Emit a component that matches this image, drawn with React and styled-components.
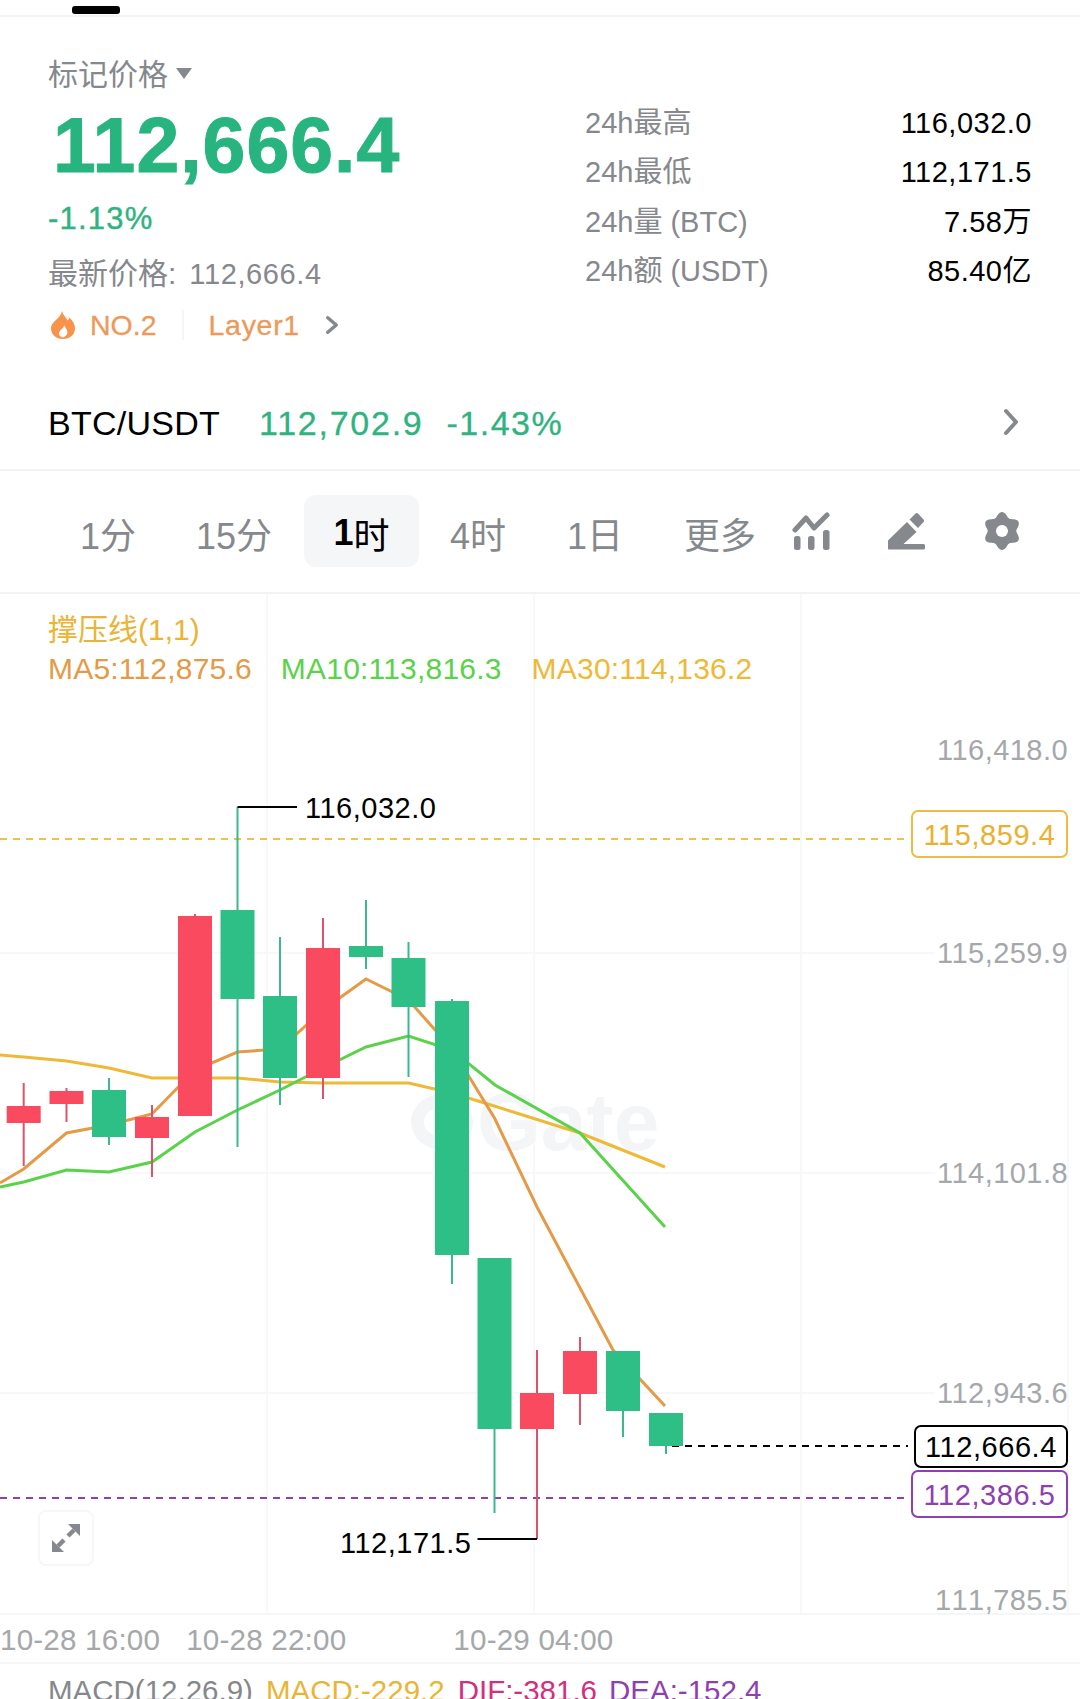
import React from "react";
import styled, { createGlobalStyle } from "styled-components";

const Global = createGlobalStyle`
  html, body { margin: 0; padding: 0; background: #fff; }
  * { box-sizing: border-box; }
`;

const Page = styled.div`
  width: 1080px;
  height: 1699px;
  overflow: hidden;
  background: #fff;
  color: #000;
  font-family: "Liberation Sans", "Noto Sans CJK SC", sans-serif;
`;

const TopBar = styled.div`
  height: 17px;
  padding: 6px 0 0 72px;
  border-bottom: 2px solid #f2f3f4;
`;
const Pill = styled.div`
  width: 48px;
  height: 8px;
  border-radius: 3px;
  background: #000;
`;

const Header = styled.section`
  height: 328px;
  padding: 38px 48px 0 48px;
  display: flex;
  justify-content: space-between;
`;
const Left = styled.div`
  display: flex;
  flex-direction: column;
`;
const MarkLabel = styled.div`
  display: flex;
  align-items: center;
  gap: 8px;
  height: 40px;
  line-height: 36px;
  font-size: 30px;
  color: #85888c;
`;
const Caret = styled.span`
  width: 0;
  height: 0;
  border-left: 8px solid transparent;
  border-right: 8px solid transparent;
  border-top: 11px solid #85888c;
  margin-top: -4px;
`;
const BigPrice = styled.div`
  margin: 10px 0 0 5px;
  height: 80px;
  line-height: 80px;
  font-size: 77px;
  font-weight: 700;
  letter-spacing: 1px;
  color: #27b47f;
  -webkit-text-stroke: 1px #27b47f;
`;
const Change = styled.div`
  margin-top: 16px;
  height: 36px;
  line-height: 36px;
  font-size: 31px;
  color: #2fb380;
  letter-spacing: 1.2px;
  -webkit-text-stroke: 0.4px #2fb380;
`;
const Latest = styled.div`
  margin-top: 19px;
  height: 36px;
  line-height: 36px;
  font-size: 30px;
  color: #85888c;
  display: flex;
  gap: 13px;
`;
const LatestValue = styled.span`
  font-size: 29px;
  letter-spacing: 0.6px;
`;
const TagRow = styled.div`
  margin-top: 13px;
  height: 40px;
  display: flex;
  align-items: center;
  font-size: 28.5px;
  color: #ec9a5a;
  -webkit-text-stroke: 0.3px #ec9a5a;
`;
const TagDivider = styled.span`
  width: 2px;
  height: 30px;
  background: #f5f5f5;
  margin: 0 25px 0 25px;
`;
const TagTrack = styled.span`
  letter-spacing: 0.7px;
`;
const Right = styled.div`
  width: 447px;
  padding-top: 43px;
`;
const StatRow = styled.div`
  height: 49.5px;
  line-height: 40px;
  display: flex;
  justify-content: space-between;
  align-items: center;
`;
const StatLabel = styled.span`
  font-size: 29px;
  color: #85888c;
`;
const StatValue = styled.span`
  font-size: 29px;
  letter-spacing: 0.5px;
  color: #000;
`;

const Ticker = styled.section`
  height: 126px;
  padding: 54px 61px 22px 48px;
  border-bottom: 2px solid #f2f3f4;
  display: flex;
  align-items: center;
`;
const Pair = styled.span`
  font-size: 34px;
  line-height: 48px;
  letter-spacing: 0.25px;
`;
const TickerPrice = styled.span`
  margin-left: ${(p) => p.$gap}px;
  font-size: 34px;
  line-height: 48px;
  color: #2fb380;
  letter-spacing: ${(p) => p.$track}px;
  -webkit-text-stroke: 0.3px #2fb380;
`;
const Spacer = styled.span`
  flex: 1;
`;
const TickerChevron = styled.span`
  display: flex;
  margin-top: -3px;
`;

const Tabs = styled.nav`
  height: 123px;
  padding: 24px 0 25px 45px;
  border-bottom: 2px solid #f2f3f4;
  display: flex;
  align-items: flex-start;
`;
const Tab = styled.div`
  width: ${(p) => p.$w}px;
  margin-left: ${(p) => p.$ml || 0}px;
  height: 72px;
  border-radius: 12px;
  padding-top: 4px;
  display: flex;
  align-items: center;
  justify-content: center;
  font-size: 36px;
  color: ${(p) => (p.$active ? "#000" : "#85888c")};
  background: ${(p) => (p.$active ? "#f4f6f8" : "transparent")};
`;
const TabDigit = styled.b`
  font-weight: 700;
`;
const ToolIcons = styled.div`
  height: 72px;
  margin-left: 5px;
  display: flex;
  gap: 58px;
  padding-top: 17px;
`;

const Chart = styled.section`
  position: relative;
  height: 1021px;
  padding: 16px 0 0 48px;
  border-bottom: 2px solid #f5f6f7;
`;
const ChartCanvas = styled.svg`
  position: absolute;
  left: 0;
  top: 0;
  width: 1080px;
  height: 1020px;
`;
const Watermark = styled.div`
  position: absolute;
  left: 411px;
  top: 496px;
  display: flex;
  align-items: center;
  height: 64px;
  font-size: 82px;
  font-weight: 700;
  color: #f3f5f6;
`;
const WatermarkRing = styled.span`
  width: 62px;
  height: 56px;
  border: 13px solid #f3f5f6;
  border-radius: 50%;
  margin-right: 4px;
`;
const Legend = styled.div`
  position: relative;
  font-size: 30px;
  line-height: 40px;
  color: #eab436;
`;
const MaRow = styled.div`
  display: flex;
  height: 38px;
  line-height: 37px;
  letter-spacing: 0.2px;
`;
const Ma = styled.span`
  color: ${(p) => p.$c};
  margin-right: ${(p) => p.$gap}px;
`;
const AxisLabel = styled.span`
  position: absolute;
  right: 12px;
  top: ${(p) => p.$y - 20}px;
  line-height: 40px;
  font-size: 29px;
  letter-spacing: 0.45px;
  font-kerning: ${(p) => (p.$plain ? "none" : "auto")};
  color: #a5a8ab;
`;
const PriceTag = styled.span`
  position: absolute;
  right: 12px;
  top: ${(p) => p.$y}px;
  width: ${(p) => p.$w}px;
  height: ${(p) => p.$h}px;
  padding-top: 2px;
  border: 2px solid ${(p) => p.$c};
  border-radius: 7px;
  display: flex;
  align-items: center;
  justify-content: center;
  font-size: 29px;
  letter-spacing: 0.55px;
  color: ${(p) => p.$text || p.$c};
  background: #fff;
`;
const Extreme = styled.span`
  position: absolute;
  left: ${(p) => p.$x}px;
  top: ${(p) => p.$y - 20}px;
  line-height: 40px;
  font-size: 29px;
  letter-spacing: 0.5px;
  color: #000;
`;
const ExpandButton = styled.div`
  position: absolute;
  left: 38px;
  top: 916px;
  width: 56px;
  height: 56px;
  border: 2px solid #f6f7f8;
  border-radius: 8px;
  display: flex;
  align-items: center;
  justify-content: center;
`;

const TimeAxis = styled.div`
  height: 49px;
  border-bottom: 2px solid #f5f6f7;
  display: flex;
  align-items: center;
  font-size: 29.6px;
  letter-spacing: 0.2px;
  color: #a5a8ab;
`;
const TimeLabel = styled.span`
  margin-left: ${(p) => p.$ml || 0}px;
  padding-top: 2px;
`;
const MacdRow = styled.div`
  padding: 7px 0 0 48px;
  display: flex;
  font-size: 29.5px;
  line-height: 40px;
  white-space: nowrap;
`;
const MacdItem = styled.span`
  color: ${(p) => p.$c};
  margin-right: ${(p) => p.$gap}px;
`;

const G = "#2dbf86";
const R = "#f94a60";
const GW = "#3bb88c";
const RW = "#d9546a";

const candles = [
  [23.7, 1083, 1166, 1106, 1123, "r"],
  [66.5, 1088, 1122, 1091, 1104, "r"],
  [109, 1078, 1145, 1090, 1137, "g"],
  [152, 1105, 1177, 1117, 1138, "r"],
  [195, 914, 1116, 916, 1116, "r"],
  [237.5, 807, 1147, 910, 999, "g"],
  [280, 937, 1105, 996, 1078, "g"],
  [323, 918, 1099, 948, 1078, "r"],
  [366, 900, 969, 946, 957, "g"],
  [408.5, 942, 1077, 958, 1007, "g"],
  [452, 999, 1284, 1001, 1255, "g"],
  [494.5, 1258, 1513, 1258, 1429, "g"],
  [537, 1350, 1539, 1393, 1429, "r"],
  [580, 1337, 1425, 1351, 1394, "r"],
  [623, 1351, 1437, 1351, 1411, "g"],
  [666, 1413, 1454, 1413, 1446, "g"],
];

const ma30 = "0,1055 23.7,1057 66.5,1061 109,1068 152,1078 195,1078 237.5,1078 280,1082 323,1083 366,1083 408.5,1083 452,1093 491,1105 580,1133 665,1167";
const ma10 = "0,1187 23.7,1182 66.5,1170 109,1172 152,1162 195,1132 237.5,1110 280,1090 323,1068 366,1047 408.5,1036 452,1050 495,1085 580,1133 665,1227";
const ma5 = "0,1183 23.7,1169 66.5,1133 109,1125 152,1114 195,1070 237.5,1052 280,1049 323,1010 366,979 408.5,1000 452,1049 494.5,1118 537,1207 613,1350 665,1406";

const gearPath = (() => {
  const pts = [];
  for (let i = 0; i < 96; i++) {
    const t = (i / 96) * Math.PI * 2;
    const r = 16.6 + 2.3 * Math.cos(6 * t);
    pts.push(`${(19 + r * Math.sin(t)).toFixed(2)} ${(19 - r * Math.cos(t)).toFixed(2)}`);
  }
  return `M${pts.join("L")}Z`;
})();

const IC = "#85888c";

const FlameIcon = () => (
  <svg width="24" height="28" viewBox="0 0 24 28" style={{ marginRight: 15, flex: "none", marginLeft: 3 }}>
    <path
      fill="#f7934a"
      fillRule="evenodd"
      d="M11 0C12 4 15 6 16.5 9.5C17.5 8.6 18 7.6 18.3 6.4C21.8 9.6 24 13.2 24 17.2C24 23.4 19 28 12 28C5 28 0 23.4 0 17.2C0 10.6 9.8 7.4 11 0ZM12 26.5C15 25.6 16.6 23.4 16.4 21C16.2 18.6 14.6 16.8 13.2 14.6C12.6 17.2 10.4 18 8.6 20.6C7 23 8.4 25.6 12 26.5Z"
    />
  </svg>
);

const Chevron = ({ w, h, sw, ml }) => (
  <svg width={w} height={h} viewBox={`0 0 ${w} ${h}`} style={{ marginLeft: ml, flex: "none" }}>
    <path d={`M${sw / 2 + 1} ${sw / 2 + 1}L${w - sw / 2 - 1} ${h / 2}L${sw / 2 + 1} ${h - sw / 2 - 1}`} fill="none" stroke={IC} strokeWidth={sw} strokeLinecap="round" strokeLinejoin="round" />
  </svg>
);

const IndicatorIcon = () => (
  <svg width="38" height="38" viewBox="0 0 38 38">
    <path d="M3 18L14 6L22 16L35 3" fill="none" stroke={IC} strokeWidth="5" strokeLinecap="round" strokeLinejoin="round" />
    <rect x="2" y="24" width="6.5" height="14" rx="2.5" fill={IC} />
    <rect x="16" y="24" width="6.5" height="14" rx="2.5" fill={IC} />
    <rect x="31" y="18" width="6.5" height="20" rx="2.5" fill={IC} />
  </svg>
);
const PenIcon = () => (
  <svg width="37" height="38" viewBox="0 0 37 38">
    <path d="M1 37.5C0.3 37.5 0 37 0 36.5V28.5L19 10L28.5 20L15.5 32H35.5C36.5 32 37 32.8 37 34.5V36C37 37 36.3 37.5 35.5 37.5Z" fill={IC} />
    <path d="M21.5 7.5L27.5 1.5C28.3 0.7 29.3 0.7 30 1.5L35.5 7.5C36.3 8.3 36.3 9.2 35.5 10L30 16Z" fill={IC} />
  </svg>
);
const GearIcon = () => (
  <svg width="38" height="38" viewBox="0 0 38 38">
    <path d={gearPath} fill={IC} />
    <circle cx="19" cy="19" r="6" fill="#fff" />
  </svg>
);
const ExpandIcon = () => (
  <svg width="28" height="28" viewBox="0 0 28 28">
    <path d="M16 0H28V12Z" fill={IC} />
    <path d="M0 28V16L12 28Z" fill={IC} />
    <path d="M22 6L16 12M6 22L12 16" stroke={IC} strokeWidth="4.5" />
  </svg>
);

export default function App() {
  return (
    <Page>
      <Global />
      <TopBar><Pill /></TopBar>
      <Header>
        <Left>
          <MarkLabel>标记价格<Caret /></MarkLabel>
          <BigPrice>112,666.4</BigPrice>
          <Change>-1.13%</Change>
          <Latest>最新价格:<LatestValue>112,666.4</LatestValue></Latest>
          <TagRow>
            <FlameIcon />
            NO.2
            <TagDivider />
            <TagTrack>Layer1</TagTrack>
            <Chevron w={14} h={20} sw={3.5} ml={25} />
          </TagRow>
        </Left>
        <Right>
          <StatRow><StatLabel>24h最高</StatLabel><StatValue>116,032.0</StatValue></StatRow>
          <StatRow><StatLabel>24h最低</StatLabel><StatValue>112,171.5</StatValue></StatRow>
          <StatRow><StatLabel>24h量 (BTC)</StatLabel><StatValue>7.58万</StatValue></StatRow>
          <StatRow><StatLabel>24h额 (USDT)</StatLabel><StatValue>85.40亿</StatValue></StatRow>
        </Right>
      </Header>
      <Ticker>
        <Pair>BTC/USDT</Pair>
        <TickerPrice $gap={39} $track={1.75}>112,702.9</TickerPrice>
        <TickerPrice $gap={23} $track={1.5}>-1.43%</TickerPrice>
        <Spacer />
        <TickerChevron><Chevron w={16} h={28} sw={4} ml={0} /></TickerChevron>
      </Ticker>
      <Tabs>
        <Tab $w={126}>1分</Tab>
        <Tab $w={126}>15分</Tab>
        <Tab $w={115} $ml={7} $active><TabDigit>1</TabDigit>时</Tab>
        <Tab $w={118}>4时</Tab>
        <Tab $w={116}>1日</Tab>
        <Tab $w={134}>更多</Tab>
        <ToolIcons>
          <IndicatorIcon />
          <PenIcon />
          <GearIcon />
        </ToolIcons>
      </Tabs>
      <Chart>
        <Watermark><WatermarkRing />Gate</Watermark>
        <ChartCanvas viewBox="0 594 1080 1020">
          <g stroke="#f5f6f7" strokeWidth="1.5">
            <path d="M267 594V1613M534 594V1613M801 594V1613M1068 960V1613" fill="none" />
            <path d="M0 953H935M0 1173H935M0 1393H935" fill="none" />
          </g>
          <line x1="0" y1="839" x2="908" y2="839" stroke="#e9c24f" strokeWidth="2" strokeDasharray="7 6" />
          <line x1="0" y1="1498" x2="908" y2="1498" stroke="#8e3fb0" strokeWidth="2" strokeDasharray="7 6" />
          <line x1="672" y1="1446" x2="908" y2="1446" stroke="#000" strokeWidth="2" strokeDasharray="7 6" />
          <polyline points={ma30} fill="none" stroke="#eeb937" strokeWidth="3" />
          <polyline points={ma10} fill="none" stroke="#5ad24a" strokeWidth="3" />
          <polyline points={ma5} fill="none" stroke="#e49a46" strokeWidth="3" />
          {candles.map(([x, hi, lo, top, bot, kind]) => (
            <g key={x}>
              <line x1={x} x2={x} y1={hi} y2={lo} stroke={kind === "g" ? GW : RW} strokeWidth="2" />
              <rect x={x - 17} y={top} width="34" height={bot - top} fill={kind === "g" ? G : R} />
            </g>
          ))}
          <path d="M237.5 807H297M477.5 1539H537" fill="none" stroke="#000" strokeWidth="2" />
        </ChartCanvas>
        <Legend>
          撑压线(1,1)
          <MaRow>
            <Ma $c="#e49a46" $gap={29}>MA5:112,875.6</Ma>
            <Ma $c="#5ad24a" $gap={30}>MA10:113,816.3</Ma>
            <Ma $c="#eeb937" $gap={0}>MA30:114,136.2</Ma>
          </MaRow>
        </Legend>
        <AxisLabel $y={156}>116,418.0</AxisLabel>
        <AxisLabel $y={359}>115,259.9</AxisLabel>
        <AxisLabel $y={579}>114,101.8</AxisLabel>
        <AxisLabel $y={799}>112,943.6</AxisLabel>
        <AxisLabel $y={1006} $plain>111,785.5</AxisLabel>
        <PriceTag $y={216} $w={157} $h={48} $c="#eebb45" $text="#eab02e">115,859.4</PriceTag>
        <PriceTag $y={831} $w={154} $h={43} $c="#000">112,666.4</PriceTag>
        <PriceTag $y={876} $w={157} $h={48} $c="#8e3fb0">112,386.5</PriceTag>
        <Extreme $x={305} $y={214}>116,032.0</Extreme>
        <Extreme $x={340} $y={949}>112,171.5</Extreme>
        <ExpandButton><ExpandIcon /></ExpandButton>
      </Chart>
      <TimeAxis>
        <TimeLabel>10-28 16:00</TimeLabel>
        <TimeLabel $ml={26}>10-28 22:00</TimeLabel>
        <TimeLabel $ml={107}>10-29 04:00</TimeLabel>
      </TimeAxis>
      <MacdRow>
        <MacdItem $c="#85888c" $gap={13}>MACD(12,26,9)</MacdItem>
        <MacdItem $c="#eab436" $gap={13}>MACD:-229.2</MacdItem>
        <MacdItem $c="#d32f7e" $gap={12}>DIF:-381.6</MacdItem>
        <MacdItem $c="#8e3fb0" $gap={0}>DEA:-152.4</MacdItem>
      </MacdRow>
    </Page>
  );
}
